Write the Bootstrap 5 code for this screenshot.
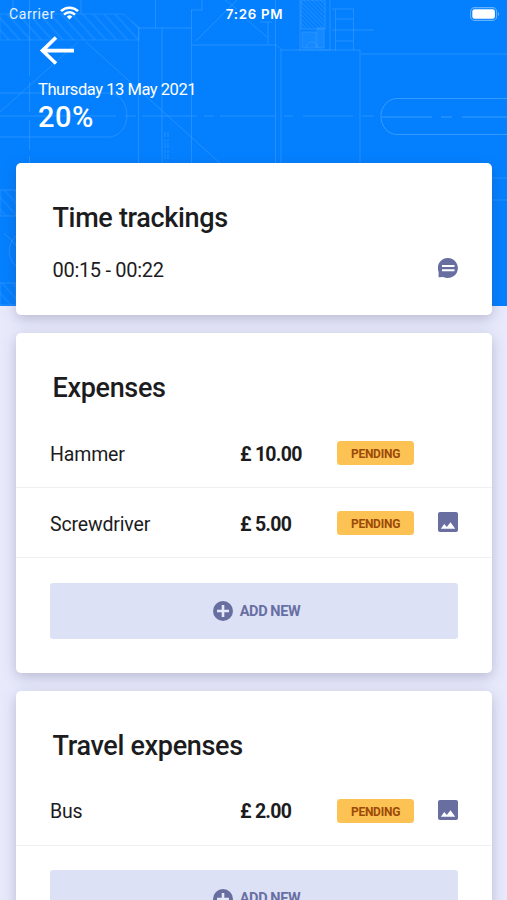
<!DOCTYPE html>
<html lang="en">
<head>
<meta charset="utf-8">
<meta name="viewport" content="width=device-width, initial-scale=1">
<title>Thursday 13 May 2021</title>
<link rel="stylesheet" href="https://cdn.jsdelivr.net/npm/bootstrap@5.3.0/dist/css/bootstrap.min.css">
<style>
  body { font-family: Roboto, "Liberation Sans", sans-serif; background: #e8eafc; color: #1c1c1e; }
  .screen { height: 900px; }
  .blueprint { height: 306px; background: #0480ff; z-index: 0; }
  .blueprint svg { display: block; }
  .content { z-index: 1; }
  .status-bar { height: 28px; padding: 0 7px 0 9px; font-size: 14px; line-height: 28px; }
  .status-bar > div { flex: 1 1 0; }
  .carrier { letter-spacing: .6px; color: #e4f1ff; }
  .wifi { margin-left: -3px; margin-top: -2px; }
  .clock { font-family: Inter, sans-serif; font-weight: 600; font-size: 13.3px; letter-spacing: .7px; }
  .day-header { height: 135px; padding: 7px 38px 0; }
  .day-date { font-size: 16.5px; line-height: 20px; margin-top: 14px; letter-spacing: -.45px; }
  .day-share { font-size: 29px; line-height: 32px; font-weight: 500; margin-top: 1px; letter-spacing: .5px; }
  .stack { padding: 0 15px 0 15.5px; gap: 18px; }
  .panel { border: 0; border-radius: 5px; box-shadow: 0 4px 14px rgba(50, 45, 90, .26); flex-shrink: 0; }
  .panel-title { height: 85px; padding: 38px 37px 0; font-size: 27px; line-height: 34px; font-weight: 500; margin: 0; letter-spacing: -.33px; }
  .entry { height: 70px; padding: 4px 34px 0 34.5px; border-bottom: 1px solid #eff0f2; font-size: 19.5px; }
  .entry-track { height: 67px; padding: 0 34px 24px 37px; font-size: 20px; letter-spacing: -.3px; }
  .entry-name { width: 190px; letter-spacing: -.15px; }
  .entry-sum { width: 97px; font-weight: 700; letter-spacing: -.75px; }
  .tag { width: 77px; height: 24px; border-radius: 3.5px; background: #fcc253; color: #9c4a08; font-size: 12px; font-weight: 700; line-height: 26px; padding: 0; margin-top: -3px; letter-spacing: -.25px; }
  .entry svg { margin-top: -5px; }
  .entry-track svg { margin-top: -3px; }
  .add-btn { height: 56px; margin: 24.5px 34px 34px 34.5px; padding: 1px 0 0 5px; border: 0; border-radius: 3px; background: #dce1f6; color: #686fa2; font-size: 14.5px; font-weight: 700; gap: 7px; letter-spacing: -.4px; }
  .add-btn span { margin-top: 1px; }
</style>
</head>
<body>
<svg class="d-none">
  <symbol id="i-image" viewBox="0 0 20 20"><path fill="#686fa0" d="M2 0h16a2 2 0 0 1 2 2v16a2 2 0 0 1-2 2H2a2 2 0 0 1-2-2V2a2 2 0 0 1 2-2z"/><path fill="#fff" d="M2.800 16.700 6.300 12l2.500 2.900 3.700-4.700 4.700 6.500z"/></symbol>
  <symbol id="i-plus" viewBox="0 0 20 20"><circle cx="10" cy="10" r="10" fill="#686fa0"/><path d="M10 4v12M4 10h12" stroke="#e6e9fb" stroke-width="2.600"/></symbol>
</svg>
<main class="screen position-relative overflow-hidden">
  <div class="blueprint position-absolute top-0 start-0 w-100">
    <svg width="507" height="306" viewBox="0 0 507 306" fill="none" stroke="#3fa0ff" stroke-opacity=".5">
      <defs>
        <pattern id="hatch" width="8" height="8" patternUnits="userSpaceOnUse" patternTransform="rotate(-42)"><path d="M4 0v8" stroke="#3fa0ff" stroke-width="1.500"/></pattern>
        <pattern id="fine" width="3" height="3" patternUnits="userSpaceOnUse" patternTransform="rotate(-45)"><path d="M1.500 0v3" stroke="#3fa0ff" stroke-width="1"/></pattern>
      </defs>
      <path d="M0 14h123l16 13v13H0z" fill="url(#hatch)" fill-opacity=".7" stroke-opacity=".35"/>
      <path d="M29.500 0v76M29.500 82v30M29.500 120v30M29.500 156v8M13 0v12M81 0v14M155.500 0v28M138 28h54M138.500 28v136M162 28v136M191.500 10v154M191 10h11V0" />
      <path d="M0 112 78 42M86 42l135 122M0 93h109a18 22 0 0 1 0 44H0M0 116h76M86 116h30M125 116h11M142 116h55M204 116h10M220 116h56M284 116h9M303 116h50M362 116h12"/>
      <path d="M196 41 237 0M225 0l12 9M192 45h84l6 5M275.500 0v164M281 50v114M281 50h79v114M361 54h146M247 20l20 17M268 22v22M272 22h-12"/>
      <rect x="300" y="-2" width="30" height="52"/>
      <path d="M301 0h24v29h-24z" fill="url(#fine)" fill-opacity=".8"/>
      <path d="M302 32h14v16h-14zM317 28h7v20h-7zM306 48a6 6 0 0 1 12 0" fill="#3fa0ff" fill-opacity=".3"/>
      <path d="M335.500 9v42M353.500 9v41M332 9h22M335 19h18M332 30h42M335 41h18"/>
      <path d="M507 98.500H397a16 18 0 0 0 0 36h110M382 117h50M441 117h11M462 117h45" stroke-opacity=".85"/>
      <path d="M0 190h16v26H0zM0 283h16v22H0z" fill="url(#hatch)" fill-opacity=".6"/>
      <path d="M16 236a15 18 0 0 0 0 30M4 233l12 12M492 178h15M492 200h15"/>
      <path d="M165 132v30M168 132v30" stroke-dasharray="5 2 3 1"/>
    </svg>
  </div>

  <div class="content position-relative d-flex flex-column">
    <div class="status-bar d-flex align-items-center text-white">
      <div class="d-flex align-items-center gap-2">
        <span class="carrier">Carrier</span>
        <svg class="wifi" width="19" height="14" viewBox="0 0 19 14" fill="none" stroke="#fff" stroke-width="2.500"><path d="M1 5.200a12.200 12.200 0 0 1 17 0M4 8.600a7.800 7.800 0 0 1 11 0"/><path d="M9.500 13.600 6.700 10.700a4 4 0 0 1 5.600 0z" fill="#fff" stroke="none"/></svg>
      </div>
      <div class="clock text-center">7:26 PM</div>
      <div class="d-flex justify-content-end">
        <svg width="30" height="14" viewBox="0 0 30 14"><rect x=".6" y=".6" width="26" height="12.800" rx="4" fill="none" stroke="#8fc6ff" stroke-opacity=".7" stroke-width="1.100"/><rect x="2.300" y="2.300" width="22.600" height="9.400" rx="2.300" fill="#fff"/><path d="M28 4.800q1.800 2.200 0 4.400z" fill="#8fc6ff"/></svg>
      </div>
    </div>
    <header class="day-header text-white">
      <svg class="d-block" width="38" height="31" viewBox="0 0 38 31" fill="none" stroke="#fff" stroke-width="3.600"><path d="M18 2.500 4.500 15.600 18 28.500M4.500 15.600H36"/></svg>
      <div class="day-date">Thursday 13 May 2021</div>
      <div class="day-share">20%</div>
    </header>

    <div class="stack d-flex flex-column">
      <section class="panel card">
        <h2 class="panel-title">Time trackings</h2>
        <div class="entry-track d-flex align-items-center justify-content-between">
          <span>00:15 - 00:22</span>
          <svg width="20" height="20" viewBox="0 0 20 20"><path fill="#686fa0" d="M10 0a10 10 0 1 1-4.700 18.900L.6 19.300V13.800A10 10 0 0 1 10 0z"/><path d="M4 8h12.500M4 12.300h12.500" stroke="#fff" stroke-width="2"/></svg>
        </div>
      </section>

      <section class="panel card">
        <h2 class="panel-title">Expenses</h2>
        <div class="entry d-flex align-items-center">
          <span class="entry-name">Hammer</span>
          <span class="entry-sum">£ 10.00</span>
          <span class="tag badge">PENDING</span>
        </div>
        <div class="entry d-flex align-items-center">
          <span class="entry-name">Screwdriver</span>
          <span class="entry-sum">£ 5.00</span>
          <span class="tag badge">PENDING</span>
          <svg class="ms-auto" width="20" height="20"><use href="#i-image"/></svg>
        </div>
        <button class="add-btn btn d-flex align-items-center justify-content-center" type="button">
          <svg width="20" height="20"><use href="#i-plus"/></svg><span>ADD NEW</span>
        </button>
      </section>

      <section class="panel card">
        <h2 class="panel-title">Travel expenses</h2>
        <div class="entry d-flex align-items-center">
          <span class="entry-name">Bus</span>
          <span class="entry-sum">£ 2.00</span>
          <span class="tag badge">PENDING</span>
          <svg class="ms-auto" width="20" height="20"><use href="#i-image"/></svg>
        </div>
        <button class="add-btn btn d-flex align-items-center justify-content-center" type="button">
          <svg width="20" height="20"><use href="#i-plus"/></svg><span>ADD NEW</span>
        </button>
      </section>
    </div>
  </div>
</main>
<script src="https://cdn.jsdelivr.net/npm/bootstrap@5.3.0/dist/js/bootstrap.bundle.min.js"></script>
</body>
</html>
